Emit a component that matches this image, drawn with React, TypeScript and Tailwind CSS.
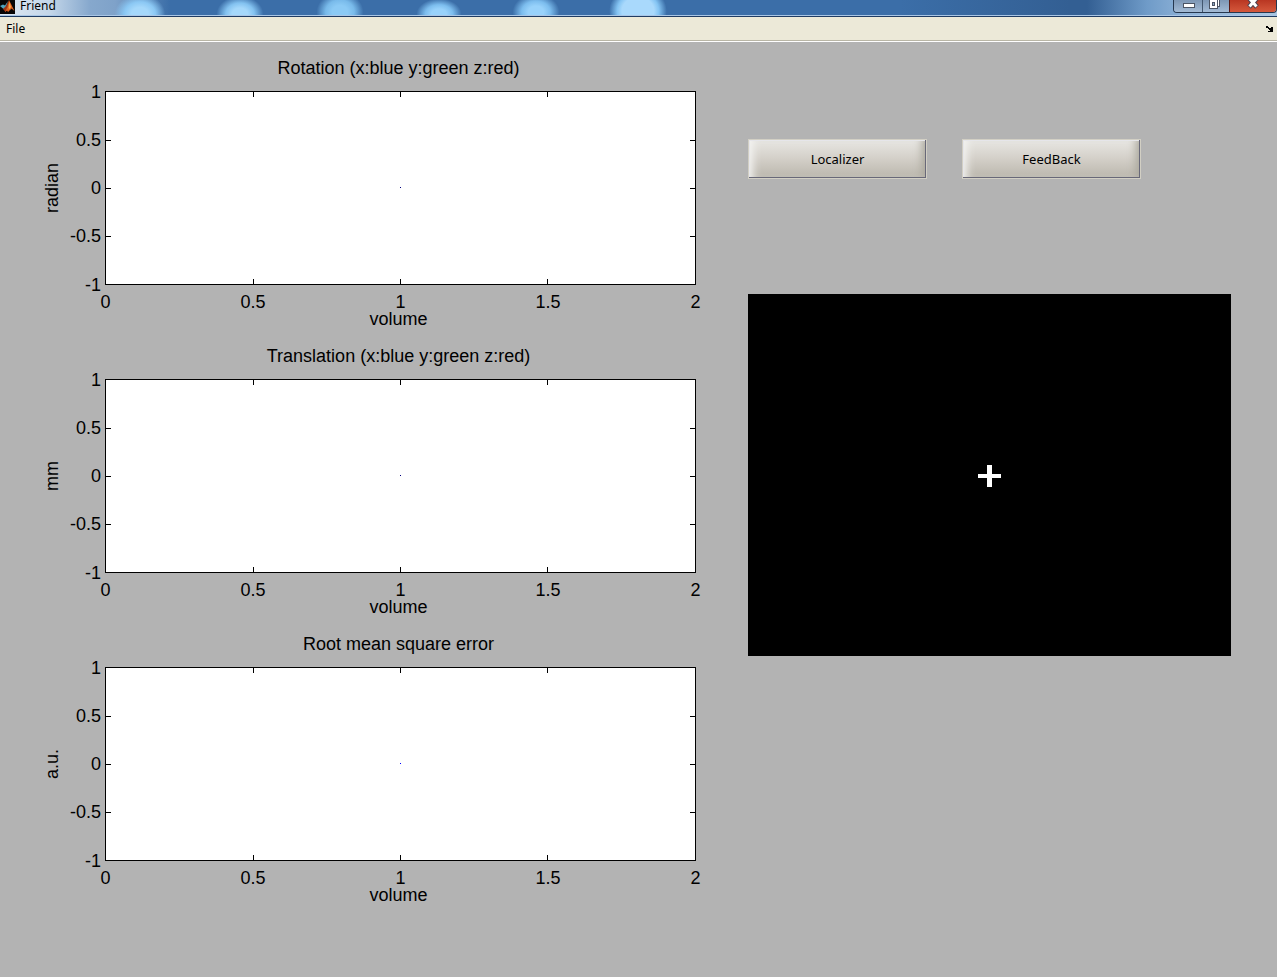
const xTicks = ["0", "0.5", "1", "1.5", "2"];
const yTicks = ["1", "0.5", "0", "-0.5", "-1"];

type PlotProps = { title: string; unit: string; dot: string };

function Plot({ title, unit, dot }: PlotProps) {
  return (
    <figure className="grid grid-cols-[20px_43px_minmax(0,1fr)] text-lg leading-5">
      <figcaption className="col-start-3 pr-1 pb-[11px] text-center leading-6">{title}</figcaption>
      <div className="col-start-1 flex items-center justify-center">
        <span className="rotate-180 leading-5 [writing-mode:vertical-rl]">{unit}</span>
      </div>
      <div className="flex flex-col items-end justify-between pr-1">
        {yTicks.map((t) => (
          <span key={t} className="flex h-px items-center">{t}</span>
        ))}
      </div>
      <svg className="block h-[194px] w-full border border-black bg-white" shapeRendering="crispEdges" aria-label={title}>
        {["25%", "50%", "75%"].map((p) => (
          <g key={p} stroke="#000">
            <line x1={p} x2={p} y1="0" y2="5" />
            <svg y="100%" overflow="visible">
              <line x1={p} x2={p} y1="-5" y2="0" />
            </svg>
            <line x1="0" x2="5" y1={p} y2={p} />
            <svg x="100%" overflow="visible">
              <line x1="-5" x2="0" y1={p} y2={p} />
            </svg>
          </g>
        ))}
        <rect x="50%" y="50%" width="1" height="1" transform="translate(-1 -1)" fill={dot} />
      </svg>
      <div className="col-start-3 flex h-[17px] justify-between pt-[7px]">
        {xTicks.map((t) => (
          <span key={t} className="flex w-px justify-center">{t}</span>
        ))}
      </div>
      <p className="col-start-3 pt-[7px] pr-1 text-center">volume</p>
    </figure>
  );
}

function Logo() {
  return (
    <svg className="h-[14px] w-[15px] shrink-0" viewBox="0 0 15 14" aria-hidden="true">
      <rect width="15" height="14" fill="#080606" />
      <path d="M0 6L3 4.5L5 5.5L8 1L6 7L3.500 9Z" fill="#4fa3bd" />
      <path d="M3 9L6 6L9 0L7.500 9L5.500 12Z" fill="#9c3414" />
      <path d="M5 12L7.500 7L9 0L11 4L14.500 11L11.500 8.500L8 12L7 10.500Z" fill="#e0601c" />
      <path d="M8.500 8L9.500 2L11 7L9.500 9Z" fill="#f4a94e" />
    </svg>
  );
}

function PushButton({ label }: { label: string }) {
  return (
    <button
      type="button"
      className="h-10 flex-1 border border-[#d2cfc4] bg-linear-to-b from-[#e8e7e3] via-[#d3cfc8] to-[#bab6ac] pt-0.5 font-['Noto_Sans',sans-serif] text-[13px] shadow-[inset_-1px_-1px_0_#686878,inset_1px_1px_0_#e6e6ea,inset_8px_0_8px_-4px_#f4f4f2,inset_-9px_0_8px_-5px_#aaa79c]"
    >
      {label}
    </button>
  );
}

export default function App() {
  return (
    <div className="flex min-h-screen flex-col bg-[#b3b3b3] font-['Liberation_Sans',sans-serif] text-black">
      <header className="flex h-[17px] items-start justify-between overflow-hidden border-b border-[#1f3c63] shadow-[inset_0_-1px_0_#a9c6e6] bg-[#3b6ea8] bg-[radial-gradient(ellipse_28px_22px_at_140px_14px,#a5d8fb_30%,#8bc8f4_55%,#8bc8f400_90%),radial-gradient(ellipse_26px_20px_at_240px_14px,#a5d8fb_30%,#83c2f0_55%,#83c2f000_90%),radial-gradient(ellipse_26px_22px_at_340px_12px,#8bcaf5_30%,#78baea_55%,#78baea00_90%),radial-gradient(ellipse_25px_17px_at_439px_14px,#98d2fb_30%,#7cbdee_55%,#7cbdee00_90%),radial-gradient(ellipse_26px_20px_at_536px_12px,#98d2fb_30%,#7cbdee_55%,#7cbdee00_90%),radial-gradient(ellipse_32px_28px_at_638px_11px,#a9d9fc_50%,#84c4f3_65%,#84c4f300_90%),linear-gradient(to_left,#a9c6e2_0px,#8fb3d8_90px,#6f9bc8_130px,#33639b00_190px),linear-gradient(to_right,#dfe8f2_0px,#c3d6e9_50px,#86a8cd_90px,#7fa2c9_115px,#3b6ea8_170px,#3b6ea8_900px,#335f93_1070px)]">
        <div className="flex items-start gap-[5px]">
          <Logo />
          <h1 className="font-['Noto_Sans',sans-serif] text-xs leading-3">Friend</h1>
        </div>
        <div className="flex h-[13px] overflow-hidden rounded-b border border-t-0 border-[#26384f]">
          <button type="button" aria-label="Minimize" className="h-3 w-7 bg-linear-to-b from-[#7d97b5] to-[#a3bbd5]">
            <svg className="block h-3 w-7" viewBox="0 0 28 12" shapeRendering="crispEdges">
              <rect x="9.500" y="3.500" width="11" height="4" fill="#fff" stroke="#4c5564" />
            </svg>
          </button>
          <button type="button" aria-label="Restore" className="h-3 w-[27px] border-l border-[#42576f] bg-linear-to-b from-[#7d97b5] to-[#a3bbd5]">
            <svg className="block h-3 w-[26px]" viewBox="0 0 26 12" shapeRendering="crispEdges">
              <path d="M9.500 -2h7v8h-7z" fill="#fff" stroke="#4c5564" />
              <path d="M6.500 -.5h8v8.500h-8z" fill="#fff" stroke="#4c5564" />
              <path d="M9.500 2.500h2v3h-2z" fill="#8ba6c4" stroke="#4c5564" />
            </svg>
          </button>
          <button type="button" aria-label="Close" className="h-3 w-[47px] border-l border-[#5a1a14] bg-linear-to-b from-[#b93622] to-[#d5583c]">
            <svg className="mx-auto block h-3 w-5" viewBox="0 0 20 12">
              <path d="M6 -2L14 7M14 -2L6 7" stroke="#4c4250" strokeWidth="5" />
              <path d="M6.500 -1.500L13.500 6.500M13.500 -1.500L6.500 6.500" stroke="#fff" strokeWidth="3" />
            </svg>
          </button>
        </div>
      </header>
      <nav className="flex h-[25px] items-center justify-between border-b border-white bg-[#ece9d8] pr-1 pl-1.5 shadow-[inset_0_-1px_0_#b9b6a6]">
        <button type="button" className="font-['Noto_Sans',sans-serif] text-xs">File</button>
        <button type="button" aria-label="Dock figure">
          <svg className="h-[6px] w-[7px]" viewBox="0 0 7 6" shapeRendering="crispEdges">
            <path d="M0 0h2v1h1v1h2V1h2v5H2V5h2V4H3V3H2V2H0z" />
          </svg>
        </button>
      </nav>
      <main className="grid grid-cols-[654fr_483fr] gap-[52px] pt-[14px] pr-[46px] pb-8 pl-[42px]">
        <section className="flex flex-col gap-[15px]">
          <Plot title="Rotation (x:blue y:green z:red)" unit="radian" dot="#000080" />
          <Plot title="Translation (x:blue y:green z:red)" unit="mm" dot="#000080" />
          <Plot title="Root mean square error" unit="a.u." dot="#0000ff" />
        </section>
        <section className="pt-[83px]">
          <div className="flex gap-[35px] pr-[90px]">
            <PushButton label="Localizer" />
            <PushButton label="FeedBack" />
          </div>
          <div className="mt-[115px] flex aspect-[483/362] items-center justify-center bg-black pt-0.5">
            <svg className="h-[22px] w-[23px]" viewBox="0 0 23 22" shapeRendering="crispEdges" aria-label="Fixation cross">
              <path d="M9 0h5v9h9v4h-9v9h-5v-9h-9v-4h9z" fill="#fff" />
            </svg>
          </div>
        </section>
      </main>
    </div>
  );
}
